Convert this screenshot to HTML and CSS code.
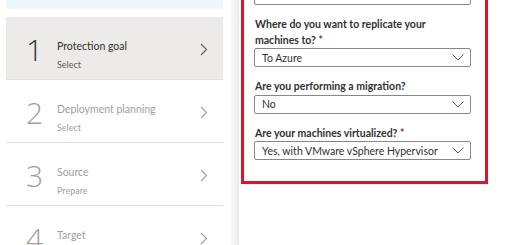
FILE: index.html
```html
<!DOCTYPE html>
<html>
<head>
<meta charset="utf-8">
<link rel="stylesheet" href="styles.css">
</head>
<body>
<div class="page">
  <nav class="steps">
    <div class="banner"></div>
    <div class="step active">
      <div class="num">1</div>
      <div class="txt"><div class="title">Protection goal</div><div class="sub">Select</div></div>
      <svg class="chev" width="8" height="13" viewBox="0 0 8 13"><polyline points="1,1 6.5,6.5 1,12" fill="none" stroke="currentColor" stroke-width="1.1"/></svg>
    </div>
    <div class="step">
      <div class="num">2</div>
      <div class="txt"><div class="title">Deployment planning</div><div class="sub">Select</div></div>
      <svg class="chev" width="8" height="13" viewBox="0 0 8 13"><polyline points="1,1 6.5,6.5 1,12" fill="none" stroke="currentColor" stroke-width="1.1"/></svg>
    </div>
    <div class="step">
      <div class="num">3</div>
      <div class="txt"><div class="title">Source</div><div class="sub">Prepare</div></div>
      <svg class="chev" width="8" height="13" viewBox="0 0 8 13"><polyline points="1,1 6.5,6.5 1,12" fill="none" stroke="currentColor" stroke-width="1.1"/></svg>
    </div>
    <div class="step">
      <div class="num">4</div>
      <div class="txt"><div class="title">Target</div><div class="sub">Prepare</div></div>
      <svg class="chev" width="8" height="13" viewBox="0 0 8 13"><polyline points="1,1 6.5,6.5 1,12" fill="none" stroke="currentColor" stroke-width="1.1"/></svg>
    </div>
  </nav>
  <div class="divider"></div>
  <main class="content">
    <section class="form">
      <div class="select first"><span class="val"></span>
        <svg class="dd" width="12" height="7" viewBox="0 0 12 7"><polyline points="0.5,0.5 6,6 11.5,0.5" fill="none" stroke="currentColor" stroke-width="1"/></svg></div>
      <label class="lbl">Where do you want to replicate your machines to? <span class="req">*</span></label>
      <div class="select"><span class="val">To Azure</span>
        <svg class="dd" width="12" height="7" viewBox="0 0 12 7"><polyline points="0.5,0.5 6,6 11.5,0.5" fill="none" stroke="currentColor" stroke-width="1"/></svg></div>
      <label class="lbl">Are you performing a migration?</label>
      <div class="select"><span class="val">No</span>
        <svg class="dd" width="12" height="7" viewBox="0 0 12 7"><polyline points="0.5,0.5 6,6 11.5,0.5" fill="none" stroke="currentColor" stroke-width="1"/></svg></div>
      <label class="lbl">Are your machines virtualized? <span class="req">*</span></label>
      <div class="select"><span class="val">Yes, with VMware vSphere Hypervisor</span>
        <svg class="dd" width="12" height="7" viewBox="0 0 12 7"><polyline points="0.5,0.5 6,6 11.5,0.5" fill="none" stroke="currentColor" stroke-width="1"/></svg></div>
    </section>
  </main>
</div>
</body>
</html>
```
FILE: styles.css
```css
html, body {
  margin: 0;
  padding: 0;
  background: #ffffff;
  overflow: hidden;
}
body {
  font-family: "Lato", "Open Sans", sans-serif;
  color: #323130;
  width: 520px;
  height: 245px;
}
.page {
  display: flex;
  align-items: flex-start;
  height: 245px;
}
.steps {
  width: 217px;
  padding-left: 6px;
  flex: none;
}
.banner {
  height: 9px;
  background: #eff6fc;
  margin-bottom: 8px;
}
.step {
  height: 62px;
  border-bottom: 1px solid #e1dfdd;
  display: flex;
  align-items: center;
  color: #a19f9d;
}
.step.active {
  background: #edebe9;
  color: #323130;
}
.num {
  width: 31px;
  padding-left: 20px;
  padding-top: 3px;
  font-family: "Open Sans", sans-serif;
  font-size: 30px;
  font-weight: 300;
  line-height: 30px;
}
.txt {
  flex: 1;
  align-self: flex-start;
  margin-top: 20px;
}
.title {
  font-size: 10.5px;
  line-height: 19px;
}
.sub {
  font-size: 9px;
  line-height: 18px;
}
.step.active .sub {
  color: #605e5c;
}
.chev {
  margin-right: 15px;
  margin-top: 2px;
}
.step .chev { color: #a19f9d; }
.step.active .chev { color: #605e5c; }
.divider {
  width: 8px;
  height: 245px;
  margin-left: 8px;
  background: linear-gradient(to right, #f8f8f8, #f1f1f1 70%, #e8e8e8);
  flex: none;
}
.content {
  flex: 1;
  padding-left: 2px;
}
.form {
  width: 217px;
  margin-top: -17px;
  border: 3px solid #e81123;
  padding: 0 14px 21px 10px;
}
.lbl {
  display: block;
  font-size: 10.5px;
  font-weight: 700;
  line-height: 15.5px;
  margin: 12px 0 0 1px;
  color: #323130;
}
.req { color: #a4262c; }
.select {
  box-sizing: border-box;
  height: 19px;
  border: 1px solid #8a8886;
  border-radius: 2px;
  display: flex;
  align-items: center;
  padding: 0 6px 0 7px;
  font-size: 10.5px;
  color: #323130;
}
.val { flex: 1; }
.dd { color: #605e5c; }
```
